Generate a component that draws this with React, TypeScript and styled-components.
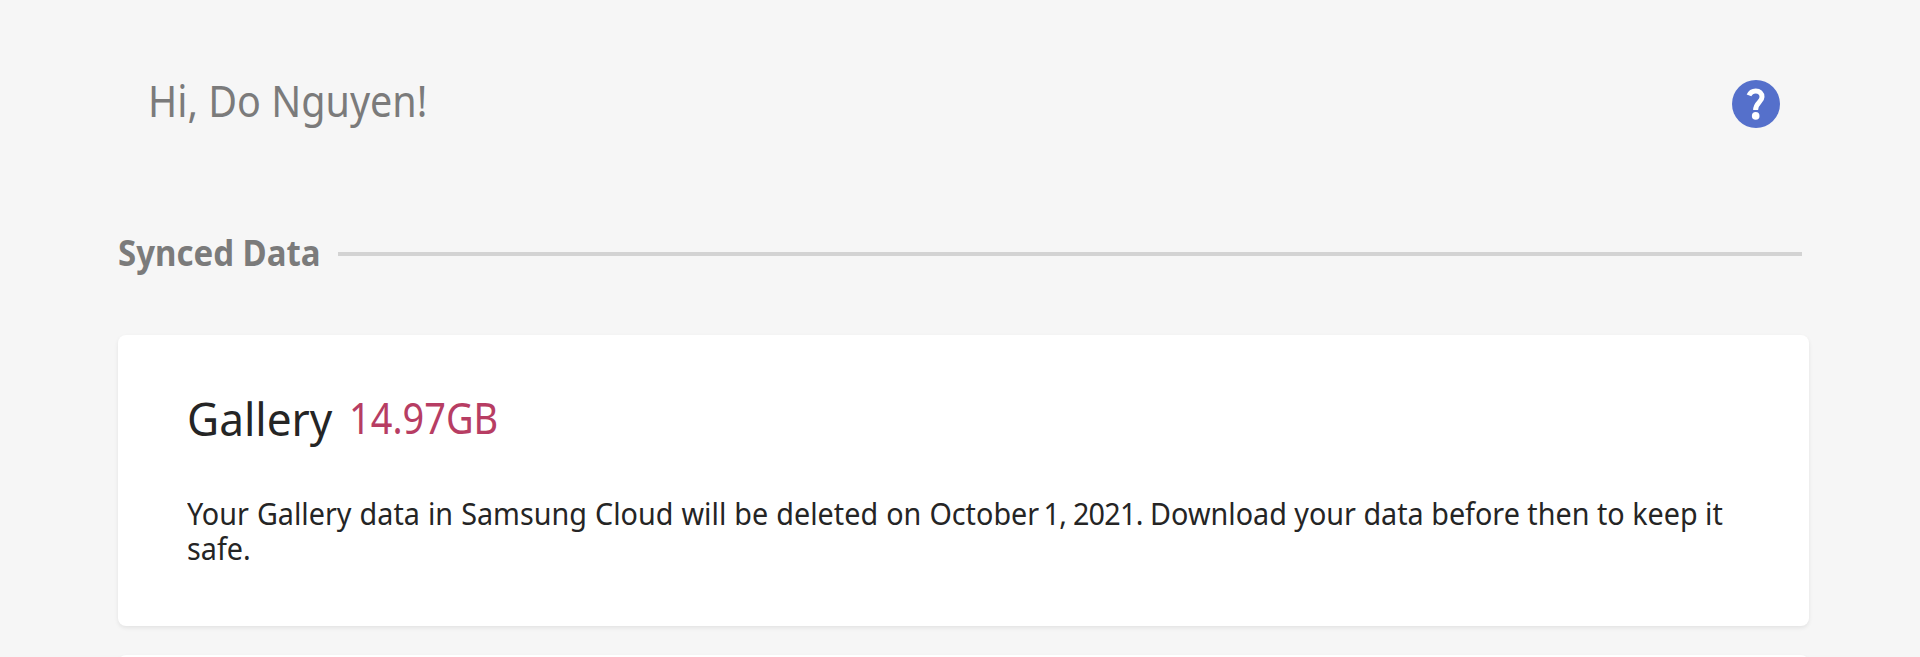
import React from "react";
import styled, { createGlobalStyle } from "styled-components";

const GlobalStyle = createGlobalStyle`
  * { box-sizing: border-box; }
  body {
    margin: 0;
    background: #f6f6f6;
    font-family: "Noto Sans", "Open Sans", sans-serif;
    overflow: hidden;
  }
`;

const Page = styled.main`
  height: 657px;
  padding: 77px 112px 0 118px;
  overflow: hidden;
`;

const Header = styled.header`
  display: flex;
  justify-content: space-between;
  align-items: flex-start;
  height: 52px;
  padding: 0 28px 0 30px;
`;

/* Noto Sans is wider than the brand face, so text is condensed horizontally. */
const Condensed = styled.span<{ $scale: number }>`
  display: block;
  white-space: nowrap;
  transform: scaleX(${(p) => p.$scale});
  transform-origin: 0 0;
`;

const Greeting = styled.h1`
  margin: 0;
  width: 290px;
  font-size: 43px;
  font-weight: 400;
  line-height: 48px;
  color: #7b7b7b;
`;

const HelpButton = styled.button`
  width: 48px;
  height: 48px;
  margin: 3px 0 0;
  padding: 0;
  border: 0;
  border-radius: 50%;
  background: #5570cb;
`;

const HelpIcon = styled.svg`
  display: block;
`;

const SectionHead = styled.div`
  display: flex;
  align-items: center;
  height: 48px;
  margin-top: 100px;
  padding-right: 6px;
`;

const SectionTitle = styled.h2`
  flex: none;
  width: 220px;
  margin: 0;
  font-size: 36px;
  font-weight: 700;
  line-height: 48px;
  color: #7b7b7b;
`;

const Rule = styled.div`
  flex: 1;
  height: 4px;
  margin-top: 1px;
  background: #d3d3d3;
`;

const CardList = styled.div`
  display: flex;
  flex-direction: column;
  gap: 29px;
  margin: 58px -1px 0 0;
`;

const Card = styled.section`
  height: 291px;
  padding: 53px 68px 0 69px;
  border-radius: 8px;
  background: #fff;
  box-shadow: 0 2px 4px rgba(0, 0, 0, 0.08);
`;

const CardTitle = styled.div`
  display: flex;
  align-items: flex-start;
  height: 60px;
`;

const Name = styled.h3`
  width: 162px;
  margin: 0;
  font-size: 46px;
  font-weight: 400;
  line-height: 60px;
  color: #252525;
`;

const Size = styled.div`
  margin-top: 1px;
  font-size: 43px;
  line-height: 57px;
  color: #b73d63;
`;

const Notice = styled.p`
  width: 1680px;
  margin: 48px 0 0;
  font-size: 31px;
  line-height: 35px;
  color: #252525;
  transform: scaleX(0.927);
  transform-origin: 0 0;
`;

const Lead = styled.span`
  word-spacing: 0.65px;
`;

const DateTail = styled.span`
  margin-left: -4px;
  letter-spacing: -0.8px;
`;

export default function App() {
  return (
    <Page>
      <GlobalStyle />
      <Header>
        <Greeting>
          <Condensed $scale={0.918}>Hi, Do Nguyen!</Condensed>
        </Greeting>
        <HelpButton aria-label="Help">
          <HelpIcon width="48" height="48" viewBox="0 0 48 48" fill="none">
            <path
              d="M17 15.4C18.2 12.4 20.6 10.9 23.7 10.9C27.4 10.9 30 13.4 30 17C30 22 23.6 22.6 23.6 30"
              stroke="#fff"
              strokeWidth="5"
            />
            <circle cx="23.7" cy="35.9" r="3.8" fill="#fff" />
          </HelpIcon>
        </HelpButton>
      </Header>

      <SectionHead>
        <SectionTitle>
          <Condensed $scale={0.916}>Synced Data</Condensed>
        </SectionTitle>
        <Rule />
      </SectionHead>

      <CardList>
        <Card>
          <CardTitle>
            <Name>
              <Condensed $scale={0.96}>Gallery</Condensed>
            </Name>
            <Size>
              <Condensed $scale={0.882}>14.97GB</Condensed>
            </Size>
          </CardTitle>
          <Notice>
            <Lead>Your Gallery data in Samsung Cloud will be deleted on October </Lead>
            <DateTail>1, 2021.</DateTail> Download your data before then to keep it safe.
          </Notice>
        </Card>
        <Card />
      </CardList>
    </Page>
  );
}
